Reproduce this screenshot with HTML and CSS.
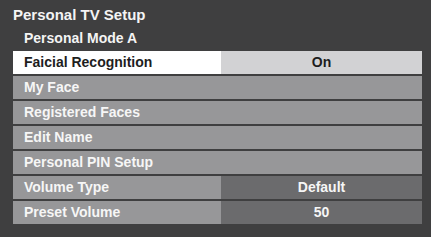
FILE: index.html
```html
<!DOCTYPE html>
<html>
<head>
<meta charset="utf-8">
<link rel="stylesheet" href="styles.css">
</head>
<body>
<div class="screen">
  <div class="title">Personal TV Setup</div>
  <div class="subtitle">Personal Mode A</div>
  <div class="rows">
    <div class="row row-active"><span class="label">Faicial Recognition</span><span class="value">On</span></div>
    <div class="row"><span class="label">My Face</span></div>
    <div class="row"><span class="label">Registered Faces</span></div>
    <div class="row"><span class="label">Edit Name</span></div>
    <div class="row"><span class="label">Personal PIN Setup</span></div>
    <div class="row row-split"><span class="label">Volume Type</span><span class="value">Default</span></div>
    <div class="row row-split"><span class="label">Preset Volume</span><span class="value">50</span></div>
  </div>
</div>
</body>
</html>
```

FILE: styles.css
```css
html, body {
  margin: 0;
  padding: 0;
  background: #3f3f40;
}
.screen {
  width: 431px;
  height: 237px;
  box-sizing: border-box;
  padding: 0 9px 0 13px;
  font-family: "Liberation Sans", Arial, sans-serif;
  font-weight: bold;
  color: #f4f4f4;
}
.title {
  font-size: 15px;
  line-height: 30px;
  height: 30px;
}
.subtitle {
  font-size: 14px;
  line-height: 17px;
  padding-left: 11px;
  margin-bottom: 4px;
}
.rows {
  display: flex;
  flex-direction: column;
  gap: 2px;
}
.row {
  display: grid;
  grid-template-columns: 208px 1fr;
  height: 23px;
  line-height: 23px;
  font-size: 14px;
  background: #979799;
  color: #f6f6f6;
}
.label {
  padding-left: 11px;
  white-space: nowrap;
}
.value {
  text-align: center;
}
.row-active {
  background: #d2d2d4;
  color: #1e1e1e;
}
.row-active .label {
  background: #ffffff;
}
.row-split .value {
  background: #6b6b6d;
  color: #f6f6f6;
}
```
